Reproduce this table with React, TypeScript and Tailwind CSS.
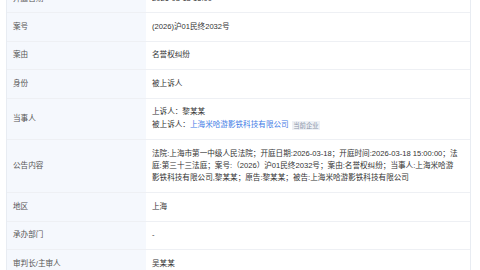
const Row = ({
  label,
  children,
  py = "py-[7.7px]",
}: {
  label: string;
  children: React.ReactNode;
  py?: string;
}) => (
  <div className="flex border-b border-[#eef0f4]">
    <div
      className={`w-[139px] shrink-0 bg-[#f5f8fd] px-[6px] ${py} flex items-center text-[#555]`}
    >
      {label}
    </div>
    <div className={`flex-1 px-[6px] ${py} text-[#333]`}>{children}</div>
  </div>
);

const App = () => {
  return (
    <div
      className="w-[480px] h-[270px] overflow-hidden bg-white text-[7.6px] leading-[12px]"
      style={{ fontFamily: '"Liberation Sans", "Noto Sans CJK SC", sans-serif' }}
    >
      <div className="-mt-[15px] ml-[6px] w-[465px] border-x border-[#e8ecf2]">
        <Row label="开庭日期">2026-03-18 15:00</Row>
        <Row label="案号">(2026)沪01民终2032号</Row>
        <Row label="案由">名誉权纠纷</Row>
        <Row label="身份">被上诉人</Row>
        <Row label="当事人">
          <div className="flex flex-col gap-[1.3px]">
            <div>上诉人：黎某某</div>
            <div className="flex items-center">
              <span>被上诉人：</span>
              <span className="text-[#3f7de6]">上海米哈游影铁科技有限公司</span>
              <span className="ml-[3px] bg-[#eef1f6] px-[1.5px] text-[6.4px] leading-[9px] text-[#8c96a8]">
                当前企业
              </span>
            </div>
          </div>
        </Row>
        <Row label="公告内容" py="py-[8px]">
          <div className="whitespace-nowrap">
            法院:上海市第一中级人民法院；开庭日期:2026-03-18；开庭时间:2026-03-18 15:00:00；法
            <br />
            庭:第三十三法庭；案号:（2026）沪01民终2032号；案由:名誉权纠纷；当事人:上海米哈游
            <br />
            影铁科技有限公司,黎某某；原告:黎某某；被告:上海米哈游影铁科技有限公司
          </div>
        </Row>
        <Row label="地区">上海</Row>
        <Row label="承办部门">-</Row>
        <Row label="审判长/主审人">吴某某</Row>
      </div>
    </div>
  );
};

export default App;
